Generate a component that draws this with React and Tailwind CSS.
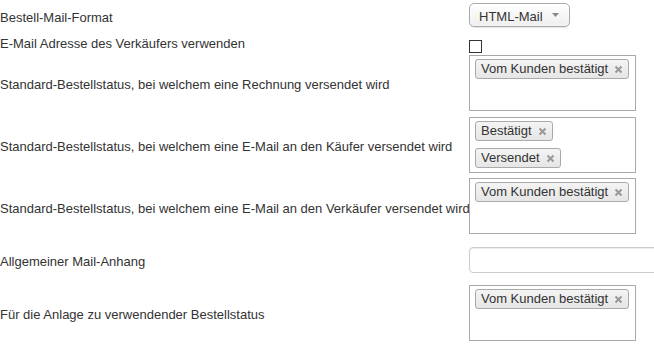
import React from "react";

function CloseIcon() {
  return (
    <svg width="9" height="9" viewBox="0 0 9 9" className="ml-[6px] shrink-0">
      <path d="M1.5 1.5 L7.5 7.5 M7.5 1.5 L1.5 7.5" stroke="#999" strokeWidth="2" strokeLinecap="butt" />
    </svg>
  );
}

function Tag({ label }) {
  return (
    <div className="flex items-center h-[20px] pl-[5px] pr-[5px] border border-[#aaa] rounded-[3px] bg-gradient-to-b from-[#f4f4f4] to-[#e6e6e6] text-[#333] leading-[18px] w-fit">
      <span>{label}</span>
      <CloseIcon />
    </div>
  );
}

function TagBox({ tags, top }) {
  return (
    <div
      className={`w-[167px] h-[56px] border border-[#aaa] bg-white pl-[5px] pt-[3px] flex flex-col gap-[7px] self-start ${top}`}
    >
      {tags.map((t) => (
        <Tag key={t} label={t} />
      ))}
    </div>
  );
}

function Row({ label, height, children }) {
  return (
    <div className={`flex ${height}`}>
      <div className="w-[469px] shrink-0 flex items-center whitespace-nowrap">{label}</div>
      {children}
    </div>
  );
}

export default function App() {
  return (
    <div
      className="w-[654px] h-[355px] overflow-hidden bg-white text-[#333] text-[13px] leading-[15px]"
      style={{ fontFamily: '"Liberation Sans", Arial, sans-serif' }}
    >
      <Row label="Bestell-Mail-Format" height="h-[34px]">
        <div className="self-start mt-[3px] w-[101px] h-[24px] border border-[#aaa] rounded-[5px] bg-gradient-to-b from-white to-[#eee] flex items-center pl-[9px] pr-[10px] justify-between shadow-[0_0_3px_white_inset,0_1px_1px_rgba(0,0,0,0.1)]">
          <span className="pt-[2px]">HTML-Mail</span>
          <svg width="7" height="4" viewBox="0 0 7 4">
            <path d="M0 0 L7 0 L3.5 4 Z" fill="#888" />
          </svg>
        </div>
      </Row>
      <Row label="E-Mail Adresse des Verkäufers verwenden" height="h-[19px]">
        <div className="self-start mt-[6px] w-[13px] h-[13px] border border-[#333] bg-white" />
      </Row>
      <Row label="Standard-Bestellstatus, bei welchem eine Rechnung versendet wird" height="h-[62px]">
        <TagBox tags={["Vom Kunden bestätigt"]} top="mt-[2px]" />
      </Row>
      <Row label="Standard-Bestellstatus, bei welchem eine E-Mail an den Käufer versendet wird" height="h-[62px]">
        <TagBox tags={["Bestätigt", "Versendet"]} top="mt-[2px]" />
      </Row>
      <Row label="Standard-Bestellstatus, bei welchem eine E-Mail an den Verkäufer versendet wird" height="h-[63px]">
        <TagBox tags={["Vom Kunden bestätigt"]} top="mt-[1px]" />
      </Row>
      <Row label="Allgemeiner Mail-Anhang" height="h-[43px]">
        <div className="self-start mt-[7px] w-[220px] h-[26px] shrink-0 border border-[#ccc] rounded-[4px] bg-white shadow-[inset_0_1px_1px_rgba(0,0,0,0.075)]" />
      </Row>
      <Row label="Für die Anlage zu verwendender Bestellstatus" height="h-[63px]">
        <TagBox tags={["Vom Kunden bestätigt"]} top="mt-[2px]" />
      </Row>
    </div>
  );
}
